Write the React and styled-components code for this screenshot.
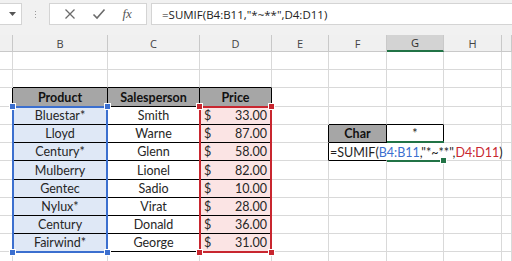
import React from "react";
import styled, { createGlobalStyle } from "styled-components";

const GlobalStyle = createGlobalStyle`
    body {
        margin: 0;
        background: #fff;
        overflow: hidden;
    }
`;

const colWidths = [13, 95, 92, 72, 57, 58, 57, 58];
const rowHeights = [18, 18, 19, 18, 18, 18, 19, 18, 18, 18, 18, 18];
const letters = ["", "B", "C", "D", "E", "F", "G", "H", ""];

const products = ["Bluestar*", "Lloyd", "Century*", "Mulberry", "Gentec", "Nylux*", "Century", "Fairwind*"];
const people = ["Smith", "Warne", "Glenn", "Lionel", "Sadio", "Virat", "Donald", "George"];
const prices = ["33.00", "87.00", "58.00", "82.00", "10.00", "28.00", "36.00", "31.00"];

const GRID = "#d9d9d9";
const BLUE = "#3b6fcf";
const RED = "#c8262f";
const GREEN = "#217346";

const Page = styled.div`
    width: 512px;
    height: 261px;
    overflow: hidden;
    font-family: Lato, "Liberation Sans", sans-serif;
`;

const Toolbar = styled.div`
    height: 35px;
    box-sizing: border-box;
    background: #f1f1f1;
    display: flex;
    align-items: flex-start;
    padding-top: 3px;
`;

const NameBox = styled.div`
    width: 22px;
    height: 22px;
    box-sizing: border-box;
    background: #fff;
    border: 1px solid #d4d4d4;
    border-left: none;
    display: flex;
    align-items: center;
    justify-content: flex-end;
    padding-right: 5px;
`;

const Dots = styled.div`
    width: 27px;
    height: 22px;
    display: flex;
    flex-direction: column;
    align-items: center;
    justify-content: center;
    gap: 2px;

    span {
        width: 1px;
        height: 1px;
        background: #9a9a9a;
    }
`;

const IconBox = styled.div`
    width: 98px;
    height: 22px;
    box-sizing: border-box;
    background: #fff;
    border: 1px solid #d4d4d4;
    display: flex;
    align-items: center;
    justify-content: space-around;
    padding: 0 6px;
    color: #6b6b6b;
`;

const Fx = styled.span`
    font-family: "Liberation Serif", serif;
    font-style: italic;
    font-size: 13px;
    color: #555;
`;

const FormulaInput = styled.div`
    flex: 1;
    margin-left: 4px;
    height: 22px;
    box-sizing: border-box;
    background: #fff;
    border: 1px solid #d4d4d4;
    border-right: none;
    font-family: "Open Sans", sans-serif;
    font-size: 11.5px;
    color: #222;
    display: flex;
    align-items: center;
    padding-left: 10px;
    white-space: nowrap;
`;

const Sheet = styled.div`
    display: grid;
    grid-template-columns: ${colWidths.map((w) => `${w}px`).join(" ")} 1fr;
    grid-template-rows: 17px ${rowHeights.map((h) => `${h}px`).join(" ")};
    font-size: 12.5px;
    color: #222;
`;

const ColHead = styled.div`
    box-sizing: border-box;
    background: ${(p) => (p.$active ? "#d3d3d3" : "#f0f0f0")};
    border-right: 1px solid #c9c9c9;
    border-bottom: ${(p) => (p.$active ? `2px solid ${GREEN}` : "1px solid #c9c9c9")};
    font-family: "Open Sans", sans-serif;
    font-size: 11px;
    color: ${(p) => (p.$active ? "#2d2d2d" : "#444")};
    display: flex;
    align-items: center;
    justify-content: center;
`;

const Cell = styled.div`
    box-sizing: border-box;
    grid-row: ${(p) => p.$row};
    grid-column: ${(p) => p.$col};
    background: ${(p) => p.$bg || "#fff"};
    border-right: 1px solid ${(p) => p.$right || GRID};
    border-bottom: 1px solid ${(p) => p.$bottom || GRID};
    font-weight: ${(p) => (p.$bold ? 700 : 400)};
    color: ${(p) => (p.$bold ? "#111" : "#262626")};
    display: flex;
    align-items: flex-end;
    justify-content: ${(p) => p.$justify || "center"};
    padding: 0 4px 1px;
    white-space: nowrap;
    overflow: hidden;
`;

const Range = styled.div`
    grid-row: 5 / 13;
    grid-column: ${(p) => p.$col};
    margin: -1px 0 -1px -1px;
    border: 2px solid ${(p) => p.$color};
    position: relative;
    z-index: 2;
    pointer-events: none;
`;

const Handle = styled.span`
    position: absolute;
    width: 5px;
    height: 5px;
    background: ${(p) => p.$color};
    border: 1px solid #fff;
    box-sizing: content-box;
    ${(p) => (p.$top ? "top: -5px;" : "bottom: -5px;")}
    ${(p) => (p.$left ? "left: -5px;" : "right: -5px;")}
`;

const ActiveCell = styled.div`
    grid-row: 7;
    grid-column: 7;
    margin: -2px 0 -1px 0;
    border-top: 2px solid ${GREEN};
    border-bottom: 2px solid ${GREEN};
    position: relative;
    z-index: 2;
`;

const FillHandle = styled.span`
    position: absolute;
    right: -3px;
    bottom: -4px;
    width: 5px;
    height: 5px;
    background: ${GREEN};
    border: 1px solid #fff;
`;

const Formula = styled.div`
    grid-row: 7;
    grid-column: 6 / 9;
    z-index: 3;
    display: flex;
    align-items: flex-end;
    padding: 0 0 1px 1px;
    white-space: nowrap;
    color: #1f1f1f;
`;

const Ref = styled.span`
    color: ${(p) => p.$color};
`;

const Caret = styled.span`
    width: 1px;
    height: 15px;
    background: #000;
    margin-left: 2px;
    align-self: center;
`;

const PriceCell = ({ value, row }) => (
    <Cell $row={row} $col={4} $bg="#fbe4e4" $right="#000" $bottom="#000" $justify="space-between">
        <span>$</span>
        <span>{value}</span>
    </Cell>
);

const buildCells = () => {
    const cells = [];
    for (let r = 1; r <= rowHeights.length; r++) {
        for (let c = 1; c <= 9; c++) {
            const inTable = r >= 3 && r <= 11 && c >= 2 && c <= 4;
            if (inTable) continue;
            if ((r === 5 && (c === 6 || c === 7)) || (r === 6 && (c === 6 || c === 7))) continue;
            let right;
            let bottom;
            if (r === 2 && c >= 2 && c <= 4) bottom = "#000";
            if (c === 1 && r >= 3 && r <= 11) right = "#000";
            if (r === 4 && (c === 6 || c === 7)) bottom = "#000";
            if (c === 5 && (r === 5 || r === 6)) right = "#000";
            cells.push(<Cell key={`${r}-${c}`} $row={r + 1} $col={c} $right={right} $bottom={bottom} />);
        }
    }
    return cells;
};

export default function App() {
    return (
        <Page>
            <GlobalStyle />
            <Toolbar>
                <NameBox>
                    <svg width="7" height="4" viewBox="0 0 7 4">
                        <path d="M0 0h7L3.5 4z" fill="#555" />
                    </svg>
                </NameBox>
                <Dots>
                    <span />
                    <span />
                    <span />
                </Dots>
                <IconBox>
                    <svg width="12" height="12" viewBox="0 0 12 12">
                        <path d="M1.5 1.5l9 9M10.5 1.5l-9 9" stroke="#6b6b6b" strokeWidth="1.3" />
                    </svg>
                    <svg width="14" height="12" viewBox="0 0 14 12">
                        <path d="M1.5 6.5l3.5 3.5 7.5-8.5" stroke="#6b6b6b" strokeWidth="1.6" fill="none" />
                    </svg>
                    <Fx>fx</Fx>
                </IconBox>
                <FormulaInput>=SUMIF(B4:B11,"*~**",D4:D11)</FormulaInput>
            </Toolbar>

            <Sheet>
                {letters.map((l, i) => (
                    <ColHead key={i} $active={l === "G"}>
                        {l}
                    </ColHead>
                ))}

                {buildCells()}

                <Cell $row={4} $col={2} $bg="#a6a6a6" $right="#000" $bottom="#000" $bold>Product</Cell>
                <Cell $row={4} $col={3} $bg="#a6a6a6" $right="#000" $bottom="#000" $bold>Salesperson</Cell>
                <Cell $row={4} $col={4} $bg="#a6a6a6" $right="#000" $bottom="#000" $bold>Price</Cell>

                {products.map((p, i) => (
                    <React.Fragment key={p + i}>
                        <Cell $row={i + 5} $col={2} $bg="#dfe8f6" $right="#000" $bottom="#000">{p}</Cell>
                        <Cell $row={i + 5} $col={3} $right="#000" $bottom="#000">{people[i]}</Cell>
                        <PriceCell row={i + 5} value={prices[i]} />
                    </React.Fragment>
                ))}

                <Cell $row={6} $col={6} $bg="#a6a6a6" $right="#000" $bottom="#000" $bold>Char</Cell>
                <Cell $row={6} $col={7} $right="#000" $bottom="#000">*</Cell>
                <Cell $row={7} $col={6} $right="#fff" $bottom="#000" />
                <Cell $row={7} $col={7} $right="#fff" />

                <Range $col={2} $color={BLUE}>
                    <Handle $color={BLUE} $top $left />
                    <Handle $color={BLUE} $top />
                    <Handle $color={BLUE} $left />
                    <Handle $color={BLUE} />
                </Range>
                <Range $col={4} $color={RED}>
                    <Handle $color={RED} $top $left />
                    <Handle $color={RED} $top />
                    <Handle $color={RED} $left />
                    <Handle $color={RED} />
                </Range>

                <ActiveCell>
                    <FillHandle />
                </ActiveCell>

                <Formula>
                    =SUMIF(<Ref $color={BLUE}>B4:B11</Ref>,"*~**",<Ref $color={RED}>D4:D11</Ref>)
                    <Caret />
                </Formula>
            </Sheet>
        </Page>
    );
}
